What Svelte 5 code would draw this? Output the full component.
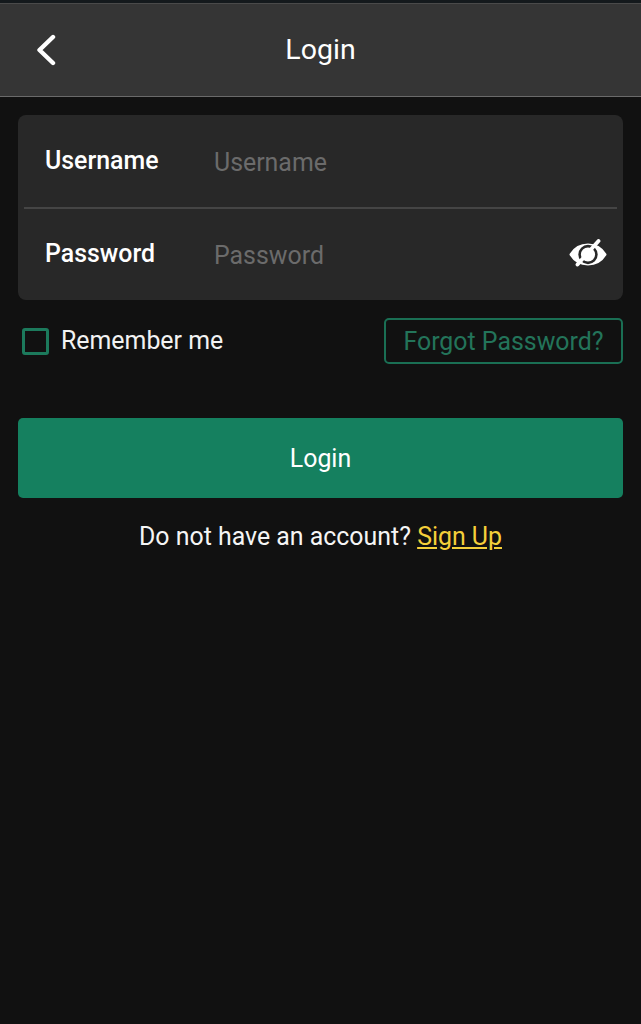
<script>
    let username = $state("")
    let password = $state("")
    let remember = $state(false)
</script>

<div class="page">
    <header class="topbar">
        <button class="back" aria-label="Back">
            <svg width="22" height="34" viewBox="0 0 22 34">
                <path d="M19 4 L5.5 17 L19 30" fill="none" stroke="#fff" stroke-width="4.4" stroke-linecap="round" stroke-linejoin="round" />
            </svg>
        </button>
        <h1>Login</h1>
    </header>

    <main class="content">
        <div class="card">
            <div class="row first">
                <label for="username">Username</label>
                <input id="username" placeholder="Username" bind:value={username} />
            </div>
            <div class="divider"></div>
            <div class="row">
                <label for="password">Password</label>
                <input id="password" type="password" placeholder="Password" bind:value={password} />
                <svg class="eye" width="38" height="30" viewBox="0 0 38 30">
                    <path fill="#fff" stroke="#fff" stroke-width="3" stroke-linejoin="round" d="M2 15.5 C6 9 12 6 19 6 C26 6 32 9 36 15.5 C32 22 26 25 19 25 C12 25 6 22 2 15.5 Z" />
                    <circle cx="19" cy="15.5" r="8.4" fill="none" stroke="#282828" stroke-width="2.6" />
                    <path d="M8.5 25.5 L29.5 2" stroke="#fff" stroke-width="3.8" stroke-linecap="round" />
                </svg>
            </div>
        </div>

        <div class="options">
            <label class="remember">
                <input type="checkbox" bind:checked={remember} />
                <span>Remember me</span>
            </label>
            <button class="forgot">Forgot Password?</button>
        </div>

        <button class="submit">Login</button>

        <p class="signup">Do not have an account? <a href="#signup">Sign Up</a></p>
    </main>
</div>

<style>
    :global(body) {
        background: #111;
    }

    .page {
        min-height: 1024px;
        background: #111;
        color: #fff;
        font-family: Roboto, "Liberation Sans", sans-serif;
        border-top: 3px solid #14191c;
        box-sizing: border-box;
    }

    .topbar {
        position: relative;
        height: 92px;
        background: #353535;
        border-top: 1px solid #4a4a4a;
        border-bottom: 1px solid #6a6a6a;
        display: flex;
        align-items: center;
        justify-content: center;
    }

    .topbar h1 {
        margin: 0 0 2px;
        font-size: 28.5px;
        font-weight: 400;
    }

    .back {
        position: absolute;
        left: 34px;
        top: 29px;
        padding: 0;
        background: none;
        border: none;
        display: flex;
    }

    .content {
        padding: 18px 18px 0;
        display: flex;
        flex-direction: column;
    }

    .card {
        background: #282828;
        border-radius: 8px;
        padding: 0 6px;
        height: 185px;
        display: flex;
        flex-direction: column;
    }

    .row {
        flex: 1;
        display: flex;
        align-items: center;
        padding: 0 10px 0 21px;
    }

    .row label {
        width: 169px;
        font-size: 24.9px;
        font-weight: 500;
        flex-shrink: 0;
        position: relative;
        top: -1px;
    }

    .row.first label {
        top: 0;
    }

    .row input {
        flex: 1;
        min-width: 0;
        background: none;
        border: none;
        outline: none;
        padding: 2px 0 0;
        color: #fff;
        font: 400 24.9px Roboto, "Liberation Sans", sans-serif;
    }

    .row.first input {
        padding-top: 4px;
    }

    .row input::placeholder {
        color: #6b6b6b;
    }

    .divider {
        height: 2px;
        background: #454545;
    }

    .eye {
        flex-shrink: 0;
    }

    .options {
        margin-top: 18px;
        display: flex;
        align-items: center;
        justify-content: space-between;
    }

    .remember {
        display: flex;
        align-items: center;
        gap: 12px;
        margin-left: 4px;
        font-size: 24.9px;
        color: #f2f2f2;
    }

    .remember span {
        margin-bottom: 2px;
    }

    .remember input {
        appearance: none;
        margin: 0;
        width: 27px;
        height: 27px;
        box-sizing: border-box;
        border: 3px solid #1c7a5c;
        border-radius: 3px;
        background: none;
    }

    .forgot {
        width: 239px;
        height: 46px;
        padding: 0;
        background: none;
        border: 2px solid #1a6f54;
        border-radius: 5px;
        color: #23745a;
        font: 400 24.9px Roboto, "Liberation Sans", sans-serif;
    }

    .submit {
        margin-top: 54px;
        height: 80px;
        padding: 0;
        background: #15805f;
        border: none;
        border-radius: 5px;
        color: #fff;
        font: 400 24.9px Roboto, "Liberation Sans", sans-serif;
    }

    .signup {
        margin: 23px 0 0;
        text-align: center;
        font-size: 24.9px;
        line-height: 32px;
        color: #f5f5f5;
    }

    .signup a {
        color: #f5cf3a;
        text-decoration: underline;
    }
</style>
